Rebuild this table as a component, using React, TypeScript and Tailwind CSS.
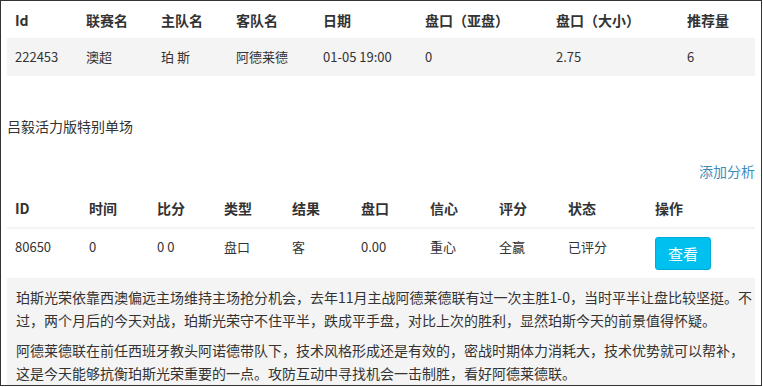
export default function App() {
  const matchHead = ['Id', '联赛名', '主队名', '客队名', '日期', '盘口（亚盘）', '盘口（大小）', '推荐量'];
  const matchRow = ['222453', '澳超', '珀 斯', '阿德莱德', '01-05 19:00', '0', '2.75', '6'];
  const tipHead = ['ID', '时间', '比分', '类型', '结果', '盘口', '信心', '评分', '状态', '操作'];
  const tipRow = ['80650', '0', '0 0', '盘口', '客', '0.00', '重心', '全赢', '已评分'];

  return (
    <div
      className="w-[762px] h-[386px] overflow-hidden border border-[#333] bg-white pl-[6px] pr-[6px] text-[14px] text-[#333]"
      style={{ fontFamily: '"Noto Sans CJK SC", "Open Sans", sans-serif' }}
    >
      {/* match table */}
      <div className="grid grid-cols-[71px_75px_75px_87px_102px_131px_131px_76px]">
        {matchHead.map((h) => (
          <div key={h} className="h-[37px] flex items-center px-2 font-bold leading-5">
            {h}
          </div>
        ))}
        {matchRow.map((c, i) => (
          <div key={i} className="h-[38px] flex items-center px-2 bg-[#f4f4f4] leading-5 text-[13px]">
            {c}
          </div>
        ))}
      </div>

      <div className="mt-[40px] leading-5">吕毅活力版特别单场</div>

      <div className="mt-[25px] leading-5 text-right text-[#3c8dbc]">添加分析</div>

      {/* tip table */}
      <div className="mt-[9px] grid grid-cols-[74px_68px_67px_68px_69px_69px_69px_69px_87px_108px]">
        {tipHead.map((h) => (
          <div key={h} className="h-[39px] flex items-center px-2 pb-[2px] font-bold leading-5 border-b-2 border-[#f4f4f4]">
            {h}
          </div>
        ))}
        {tipRow.map((c, i) => (
          <div key={i} className="h-[49px] px-2 pt-[8px] leading-5 text-[13px]">
            {c}
          </div>
        ))}
        <div className="h-[49px] px-2 pt-[8px]">
          <button className="h-[33px] px-[12px] rounded-[3px] bg-[#00c0ef] border border-[#00acd6] text-white text-[15px] leading-5">
            查看
          </button>
        </div>
      </div>

      <div className="bg-[#f4f4f4] pl-[9px] pr-0 pt-[8px] h-[120px] leading-[23px]">
        <p className="mb-[7px]">
          珀斯光荣依靠西澳偏远主场维持主场抢分机会，去年11月主战阿德莱德联有过一次主胜1-0，当时平半让盘比较坚挺。不过，两个月后的今天对战，珀斯光荣守不住平半，跌成平手盘，对比上次的胜利，显然珀斯今天的前景值得怀疑。
        </p>
        <p>
          阿德莱德联在前任西班牙教头阿诺德带队下，技术风格形成还是有效的，密战时期体力消耗大，技术优势就可以帮补，这是今天能够抗衡珀斯光荣重要的一点。攻防互动中寻找机会一击制胜，看好阿德莱德联。
        </p>
      </div>
    </div>
  );
}
